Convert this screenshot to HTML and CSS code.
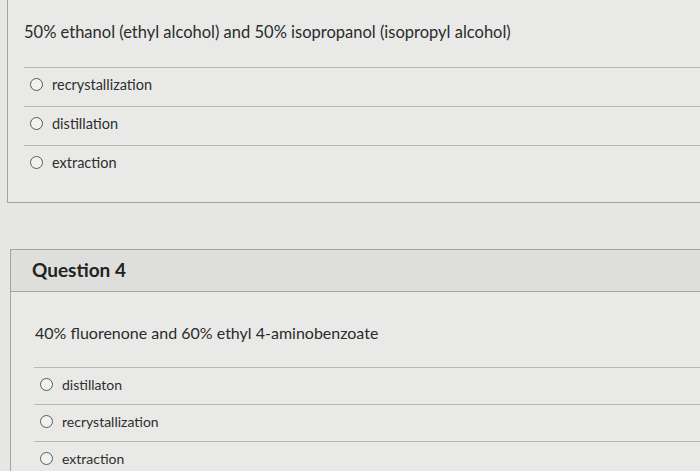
FILE: index.html
```html
<!DOCTYPE html>
<html>
<head>
<meta charset="utf-8">
<link rel="stylesheet" href="styles.css">
</head>
<body>
<div class="card card-cont">
  <div class="content content-a">
    <div class="qtext qtext-a">50% ethanol (ethyl alcohol) and 50% isopropanol (isopropyl alcohol)</div>
    <div class="opts opts-a">
      <div class="opt"><span class="radio"></span><span class="label">recrystallization</span></div>
      <div class="opt"><span class="radio"></span><span class="label">distillation</span></div>
      <div class="opt"><span class="radio"></span><span class="label">extraction</span></div>
    </div>
  </div>
</div>
<div class="card card-b">
  <div class="header">Question 4</div>
  <div class="content content-b">
    <div class="qtext qtext-b">40% fluorenone and 60% ethyl 4-aminobenzoate</div>
    <div class="opts opts-b">
      <div class="opt"><span class="radio"></span><span class="label">distillaton</span></div>
      <div class="opt"><span class="radio"></span><span class="label">recrystallization</span></div>
      <div class="opt"><span class="radio"></span><span class="label">extraction</span></div>
    </div>
  </div>
</div>
</body>
</html>
```
FILE: styles.css
```css
html, body {
  margin: 0;
  padding: 0;
  background: #e7e8e5;
  font-family: Lato, "Open Sans", sans-serif;
  color: #2b2b2b;
  overflow: hidden;
}
.card {
  background: #e9eae7;
  border: 1px solid #a3a4a1;
  border-right: none;
}
.card-cont {
  margin-left: 7px;
  border-top: none;
}
.card-b {
  margin-top: 46px;
  margin-left: 10px;
}
.content-a {
  padding: 0 0 18px 16px;
}
.content-b {
  padding: 0 0 0 23px;
}
.qtext {
  font-size: 16px;
  line-height: 20px;
}
.qtext-a {
  font-size: 16.5px;
  padding: 22px 0 25px 0;
}
.qtext-b {
  padding: 31px 0 24px 1px;
}
.header {
  background: #dedfdc;
  border-bottom: 1px solid #a3a4a1;
  height: 42px;
  box-sizing: border-box;
  display: flex;
  align-items: center;
  padding: 0 0 3px 21px;
  font-size: 19px;
  font-weight: 700;
  color: #222;
}
.opt {
  border-top: 1px solid #b8b9b6;
  height: 38px;
  box-sizing: content-box;
  display: flex;
  align-items: center;
  padding: 0 0 0 6px;
  gap: 9px;
  font-size: 14px;
}
.opts-a .opt {
  height: 33px;
  padding-bottom: 5px;
  font-size: 14.5px;
}
.opts-b .opt {
  height: 33px;
  padding-bottom: 3px;
}
.radio {
  width: 11px;
  height: 11px;
  border: 1px solid #5a5a5a;
  border-radius: 50%;
  background: #f1f2ef;
  flex: none;
}
.label {
  line-height: 18px;
  color: #2e2e2e;
}
```
